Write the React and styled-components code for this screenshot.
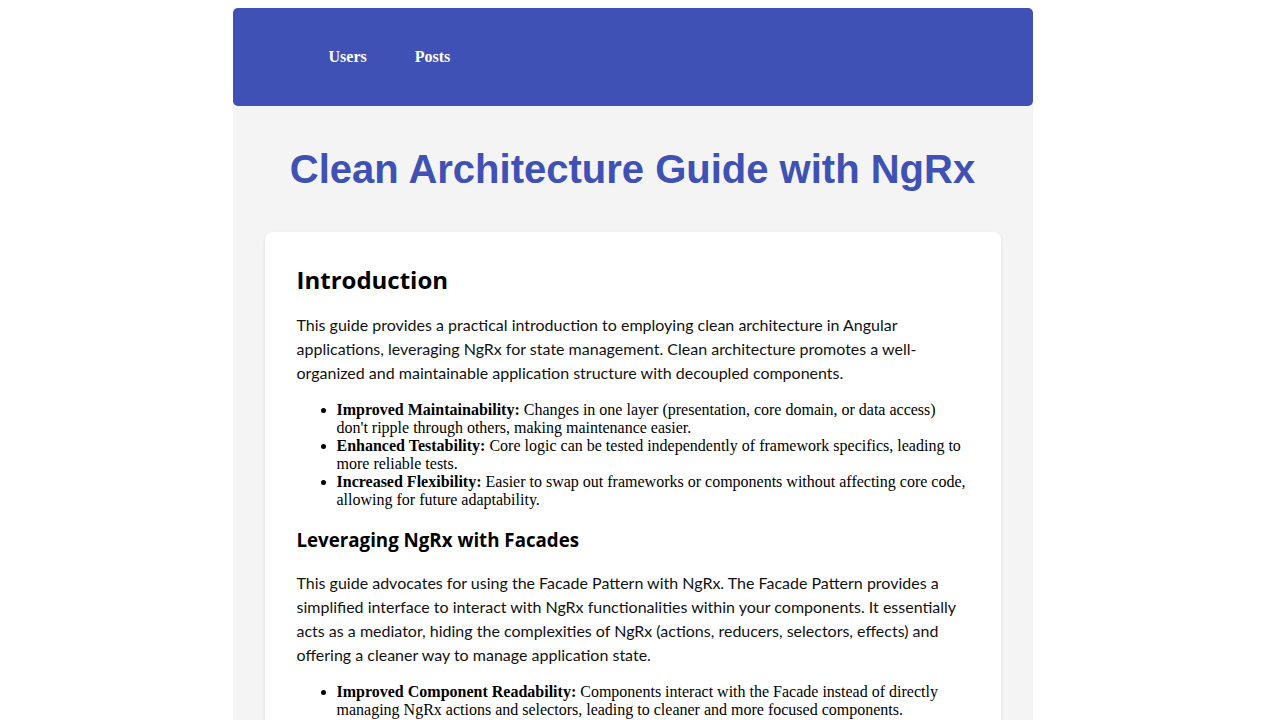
import React from "react";
import styled, { createGlobalStyle } from "styled-components";

const GlobalStyle = createGlobalStyle`
  html {
    overflow-y: scroll;
  }
  body {
    margin: 8px 23px 8px 8px;
    background: #ffffff;
    font-family: "Liberation Serif", serif;
  }
`;

const sections = [
  {
    title: "Introduction",
    level: 1,
    text:
      "This guide provides a practical introduction to employing clean architecture in Angular applications, leveraging NgRx for state management. Clean architecture promotes a well-organized and maintainable application structure with decoupled components.",
    items: [
      ["Improved Maintainability:", "Changes in one layer (presentation, core domain, or data access) don't ripple through others, making maintenance easier."],
      ["Enhanced Testability:", "Core logic can be tested independently of framework specifics, leading to more reliable tests."],
      ["Increased Flexibility:", "Easier to swap out frameworks or components without affecting core code, allowing for future adaptability."],
    ],
  },
  {
    title: "Leveraging NgRx with Facades",
    level: 2,
    text:
      "This guide advocates for using the Facade Pattern with NgRx. The Facade Pattern provides a simplified interface to interact with NgRx functionalities within your components. It essentially acts as a mediator, hiding the complexities of NgRx (actions, reducers, selectors, effects) and offering a cleaner way to manage application state.",
    items: [
      ["Improved Component Readability:", "Components interact with the Facade instead of directly managing NgRx actions and selectors, leading to cleaner and more focused components."],
      ["Simplified Testing:", "Facades can be mocked easily, allowing components to be tested in isolation from the store."],
      ["Centralized State Access:", "All interactions with a feature's state go through a single service, making changes easier to track."],
    ],
  },
  {
    title: "Project Structure",
    level: 2,
    text:
      "The application is split into layers: a presentation layer with components, a core layer holding models and facades, and a data layer responsible for talking to external APIs.",
    items: [
      ["Presentation:", "Components and templates that render data and forward user events to facades."],
      ["Core:", "Models, facades and the NgRx store definitions for each feature."],
      ["Data:", "Services that fetch and persist data, used by effects."],
    ],
  },
];

const App = () => {
  return (
    <>
      <GlobalStyle />
      <Page>
        <Nav>
          <NavLink href="#users">Users</NavLink>
          <NavLink href="#posts">Posts</NavLink>
        </Nav>
        <Main>
          <Title>Clean Architecture Guide with NgRx</Title>
          <Card>
            {sections.map((s) => (
              <Section key={s.title}>
                <Heading $level={s.level}>{s.title}</Heading>
                <Para>{s.text}</Para>
                <List>
                  {s.items.map(([label, body]) => (
                    <Item key={label}>
                      <strong>{label}</strong> {body}
                    </Item>
                  ))}
                </List>
              </Section>
            ))}
          </Card>
        </Main>
      </Page>
    </>
  );
};

export default App;

const Page = styled.div`
  max-width: 800px;
  margin: 0 auto;
  background: #f4f4f4;
`;

const Nav = styled.nav`
  height: 98px;
  background: #3f51b5;
  border-radius: 5px;
  display: flex;
  align-items: center;
  gap: 48px;
  padding-left: 96px;
`;

const NavLink = styled.a`
  color: #ffffff;
  text-decoration: none;
  font-family: "Liberation Serif", serif;
  font-weight: bold;
  font-size: 16px;
`;

const Main = styled.main`
  padding: 35px 32px 32px;
`;

const Title = styled.h1`
  margin: 0 0 35px;
  text-align: center;
  color: #3f51b5;
  font-family: "Liberation Sans", Arial, sans-serif;
  font-weight: bold;
  font-size: 40px;
  line-height: 56px;
`;

const Card = styled.div`
  background: #ffffff;
  border-radius: 8px;
  box-shadow: 0 2px 4px rgba(0, 0, 0, 0.08);
  padding: 32px;
`;

const Section = styled.section``;

const Heading = styled.h2`
  color: #000000;
  font-family: "Open Sans", sans-serif;
  font-weight: bold;
  font-size: ${(p) => (p.$level === 1 ? "24px" : "18.72px")};
  line-height: ${(p) => (p.$level === 1 ? "32px" : "25px")};
  margin: ${(p) => (p.$level === 1 ? "0 0 17px" : "18px 0 19px")};
`;

const Para = styled.p`
  margin: 0;
  font-family: Lato, sans-serif;
  font-size: 16px;
  line-height: 24px;
  color: #111111;
`;

const List = styled.ul`
  margin: 16px 0 0;
  padding-left: 40px;
  font-family: "Liberation Serif", serif;
  font-size: 16px;
  color: #000000;
`;

const Item = styled.li``;
